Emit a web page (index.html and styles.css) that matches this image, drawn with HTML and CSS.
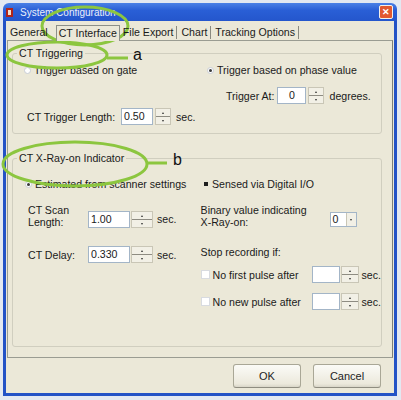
FILE: index.html
```html
<!DOCTYPE html>
<html lang="en">
  <head>
    <meta charset="UTF-8" />
    <meta name="viewport" content="width=device-width, initial-scale=1.0" />
    <title>System Configuration</title>
    <link rel="stylesheet" href="styles.css">
  </head>
  <body>
    <div class="window">
      <div class="titlebar">
        <span class="app-icon"><span></span></span>
        <span class="title">System Configuration</span>
        <span class="close">✕</span>
      </div>
      <div class="client">
        <div class="tabs">
          <div class="tab first">General</div>
          <div class="tab active">CT Interface</div>
          <div class="tab">File Export</div>
          <div class="tab">Chart</div>
          <div class="tab">Tracking Options</div>
        </div>

        <div class="page">
          <fieldset class="group group-trigger">
            <legend>CT Triggering</legend>
            <div class="row row-radios">
              <div class="option col-left"><span class="radio"></span>Trigger based on gate</div>
              <div class="option"><span class="radio checked"></span>Trigger based on phase value</div>
            </div>
            <div class="row row-at">
              <span class="lbl lbl-at">Trigger At:</span>
              <span class="field field-at">0</span>
              <span class="spin"><i class="up"></i><i class="down"></i></span>
              <span class="unit">degrees.</span>
            </div>
            <div class="row row-length">
              <span class="lbl lbl-length">CT Trigger Length:</span>
              <span class="field field-length">0.50</span>
              <span class="spin"><i class="up"></i><i class="down"></i></span>
              <span class="unit">sec.</span>
            </div>
          </fieldset>

          <fieldset class="group group-xray">
            <legend>CT X-Ray-on Indicator</legend>
            <div class="row row-radios">
              <div class="option col-left2"><span class="radio checked"></span>Estimated from scanner settings</div>
              <div class="option"><span class="radio checked square"></span>Sensed via Digital I/O</div>
            </div>
            <div class="columns">
              <div class="col col-left2">
                <div class="row row-scan">
                  <span class="lbl lbl-two">CT Scan<br>Length:</span>
                  <span class="field field-wide">1.00</span>
                  <span class="spin spin-wide"><i class="up"></i><i class="down"></i></span>
                  <span class="unit unit-sec">sec.</span>
                </div>
                <div class="row row-delay">
                  <span class="lbl lbl-two">CT Delay:</span>
                  <span class="field field-wide">0.330</span>
                  <span class="spin spin-wide"><i class="up"></i><i class="down"></i></span>
                  <span class="unit unit-sec">sec.</span>
                </div>
              </div>
              <div class="col">
                <div class="row row-binary">
                  <span class="lbl lbl-binary">Binary value indicating<br>X-Ray-on:</span>
                  <span class="select"><span class="value">0</span><span class="drop"></span></span>
                </div>
                <div class="stop">Stop recording if:</div>
                <div class="row row-check first-check">
                  <span class="option lbl-check"><span class="checkbox"></span>No first pulse after</span>
                  <span class="field field-small"></span>
                  <span class="spin spin-small"><i class="up"></i><i class="down"></i></span>
                  <span class="unit unit-tight">sec.</span>
                </div>
                <div class="row row-check">
                  <span class="option lbl-check"><span class="checkbox"></span>No new pulse after</span>
                  <span class="field field-small"></span>
                  <span class="spin spin-small"><i class="up"></i><i class="down"></i></span>
                  <span class="unit unit-tight">sec.</span>
                </div>
              </div>
            </div>
          </fieldset>
        </div>

        <div class="buttons">
          <button type="button">OK</button>
          <button type="button">Cancel</button>
        </div>
      </div>
    </div>

    <!-- callout marks drawn over the dialog -->
    <svg class="marks" width="401" height="400" viewBox="0 0 401 400">
      <ellipse cx="85" cy="26" rx="43" ry="19" />
      <ellipse cx="57" cy="55" rx="50" ry="13" />
      <line x1="107" y1="58" x2="128" y2="58" />
      <ellipse cx="75" cy="164" rx="72" ry="22" />
      <line x1="147" y1="163" x2="167" y2="163" />
    </svg>
    <span class="mark-label mark-a">a</span>
    <span class="mark-label mark-b">b</span>
  </body>
</html>
```

FILE: styles.css
```css
body {
  margin: 0;
  background-color: #e3e8f1;
  font-family: "Liberation Sans", Arial, sans-serif;
  font-size: 10.6px;
  color: #1a1a1a;
  position: relative;
  width: 401px;
  height: 400px;
  overflow: hidden;
}

.window {
  margin: 3px 0 0 3px;
  width: 394px;
  height: 393px;
  display: flex;
  flex-direction: column;
}

.titlebar {
  height: 18px;
  display: flex;
  align-items: center;
  padding: 0 4px 0 3px;
  background: linear-gradient(#4a80e6, #2a5fd6 40%, #2456cc);
  border-radius: 6px 6px 0 0;
  color: #ffffff;
}

.app-icon {
  width: 7px;
  height: 9px;
  background-color: #b0241a;
  margin-right: 7px;
  display: flex;
  align-items: center;
  justify-content: center;
}

.app-icon span {
  width: 3px;
  height: 5px;
  background-color: #f3e0d0;
}

.title {
  flex: 1;
  font-size: 10px;
  opacity: 0.9;
}

.close {
  width: 12px;
  height: 12px;
  background-color: #e2582f;
  border: 1px solid #f4f0ea;
  border-radius: 2px;
  color: #ffffff;
  font-size: 9px;
  font-weight: bold;
  line-height: 12px;
  text-align: center;
}

.client {
  flex: 1;
  display: flex;
  flex-direction: column;
  background-color: #ebe8d8;
  border: 3px solid #2352c6;
  border-top: none;
  padding: 4px 1px 0 1px;
}

.tabs {
  display: flex;
  height: 15px;
  align-items: stretch;
  position: relative;
  z-index: 1;
  white-space: nowrap;
}

.tab {
  padding: 0 3px 0 0;
  line-height: 13px;
  border-right: 1px solid #8a8a80;
  margin: 1px 4px 1px 0;
}

.tab.first {
  border-right: none;
  padding-left: 3px;
  margin-right: 5px;
}

.tab.active {
  border: 1px solid #8c8f88;
  border-bottom: none;
  margin: 0 3px -1px 0;
  padding: 0 2px;
  line-height: 14px;
  background-color: #ebe8d8;
}

.page {
  height: 318px;
  box-sizing: border-box;
  border: 1px solid #9a9c92;
  border-right-color: #7d7f78;
  padding: 6px 10px 0 4px;
}

.group {
  margin: 0;
  border: 1px solid #d0cebf;
  border-radius: 3px;
  min-width: 0;
}

.group legend {
  padding: 0 2px;
  line-height: 13px;
}

.group-trigger {
  padding: 3px 0 8px 14px;
}

.group-trigger legend {
  margin-left: -10px;
}

.group-xray {
  margin-top: 18px;
  padding: 12px 0 36px 15px;
}

.group-xray legend {
  margin-left: -11px;
}

.row {
  display: flex;
  align-items: center;
  white-space: nowrap;
}

.lbl {
  flex-shrink: 0;
}

.option {
  display: flex;
  align-items: center;
  white-space: nowrap;
}

.radio {
  width: 7px;
  height: 7px;
  border-radius: 50%;
  border: 1px solid #c8cdd6;
  background-color: #ffffff;
  margin-right: 3px;
  box-sizing: border-box;
  display: flex;
  align-items: center;
  justify-content: center;
}

.radio.checked::after {
  content: "";
  width: 3px;
  height: 3px;
  border-radius: 50%;
  background-color: #3a3a3a;
}

.radio.square {
  border-radius: 0;
  border: none;
  background-color: transparent;
}

.radio.square::after {
  width: 4px;
  height: 4px;
  border-radius: 0;
  background-color: #1e1e1e;
}

.checkbox {
  width: 7px;
  height: 7px;
  background-color: #ffffff;
  border: 1px solid #d8dbe0;
  margin-right: 3px;
}

.row-radios {
  height: 14px;
}

.col-left {
  width: 180px;
}

.col-left .radio,
.col-left2 .radio {
  margin-left: -3px;
}

.col-left2 {
  width: 174px;
}

.row-at {
  height: 17px;
  margin-top: 10px;
  padding-left: 199px;
}

.row-length {
  height: 17px;
  margin-top: 4px;
}

.lbl-at {
  margin-right: 3px;
}

.lbl-length {
  width: 94px;
}

.field {
  height: 17px;
  box-sizing: border-box;
  border: 1px solid #a3b5c7;
  background-color: #ffffff;
  line-height: 15px;
  padding-left: 2px;
}

.field-at {
  width: 29px;
  text-align: center;
  padding: 0;
}

.field-length {
  width: 32px;
}

.field-wide {
  width: 42px;
}

.field-small {
  width: 28px;
}

.spin {
  width: 16px;
  height: 17px;
  box-sizing: border-box;
  margin-left: 2px;
  display: flex;
  flex-direction: column;
  border: 1px solid #c9c6b6;
  background-color: #f2f0e6;
}

.spin i {
  flex: 1;
  display: flex;
  align-items: center;
  justify-content: center;
}

.spin i + i {
  border-top: 1px solid #8e8c82;
}

.spin i::after {
  content: "";
  border-left: 1px solid transparent;
  border-right: 1px solid transparent;
}

.spin .up::after {
  border-bottom: 2px solid #333333;
}

.spin .down::after {
  border-top: 2px solid #333333;
}

.spin-wide {
  width: 22px;
  margin-left: 1px;
}

.spin-small {
  width: 18px;
  margin-left: 1px;
}

.unit {
  margin-left: 5px;
}

.unit-sec {
  margin-left: 4px;
}

.unit-tight {
  margin-left: 3px;
}

.columns {
  display: flex;
  margin-top: 12px;
}

.row-scan {
  height: 25px;
  align-items: flex-end;
}

.row-scan .unit-sec {
  margin-bottom: 3px;
}

.row-delay {
  height: 17px;
  margin-top: 18px;
}

.lbl-two {
  width: 60px;
  line-height: 12px;
}

.row-scan .lbl-two {
  align-self: flex-start;
  padding-top: 1px;
}

.row-binary {
  height: 25px;
  align-items: flex-end;
}

.lbl-binary {
  width: 129px;
  line-height: 12px;
  align-self: flex-start;
  padding-top: 1px;
}

.select {
  width: 27px;
  height: 15px;
  box-sizing: border-box;
  border: 1px solid #a3b5c7;
  background-color: #ffffff;
  display: flex;
  margin-bottom: 1px;
}

.select .value {
  flex: 1;
  padding-left: 2px;
  line-height: 13px;
}

.select .drop {
  width: 9px;
  background-color: #f2f0e6;
  border-left: 1px solid #c9c6b6;
  display: flex;
  align-items: center;
  justify-content: center;
}

.select .drop::after {
  content: "";
  border-left: 1px solid transparent;
  border-right: 1px solid transparent;
  border-top: 2px solid #333333;
}

.stop {
  margin-top: 18px;
  line-height: 12px;
}

.row-check {
  height: 17px;
  margin-top: 10px;
}

.first-check {
  margin-top: 8px;
}

.lbl-check {
  width: 111px;
}

.buttons {
  display: flex;
  justify-content: flex-end;
  gap: 12px;
  margin-top: 6px;
  padding-right: 12px;
}

button {
  width: 68px;
  height: 24px;
  border: 1px solid #a9a796;
  border-bottom-color: #8f8d80;
  border-radius: 3px;
  background: linear-gradient(#fbfbf7, #ece9dc 85%, #d9d6c8);
  font-family: "Liberation Sans", Arial, sans-serif;
  font-size: 11px;
  color: #1e1e1e;
  padding: 0;
}

.marks {
  position: absolute;
  left: 0;
  top: 0;
  pointer-events: none;
}

.marks ellipse,
.marks line {
  fill: none;
  stroke: #8cc63f;
  stroke-width: 3;
}

.mark-label {
  position: absolute;
  font-family: "Liberation Sans", Arial, sans-serif;
  font-size: 16px;
  line-height: 16px;
  color: #111111;
}

.mark-a {
  left: 133px;
  top: 47px;
}

.mark-b {
  left: 173px;
  top: 152px;
}
```
